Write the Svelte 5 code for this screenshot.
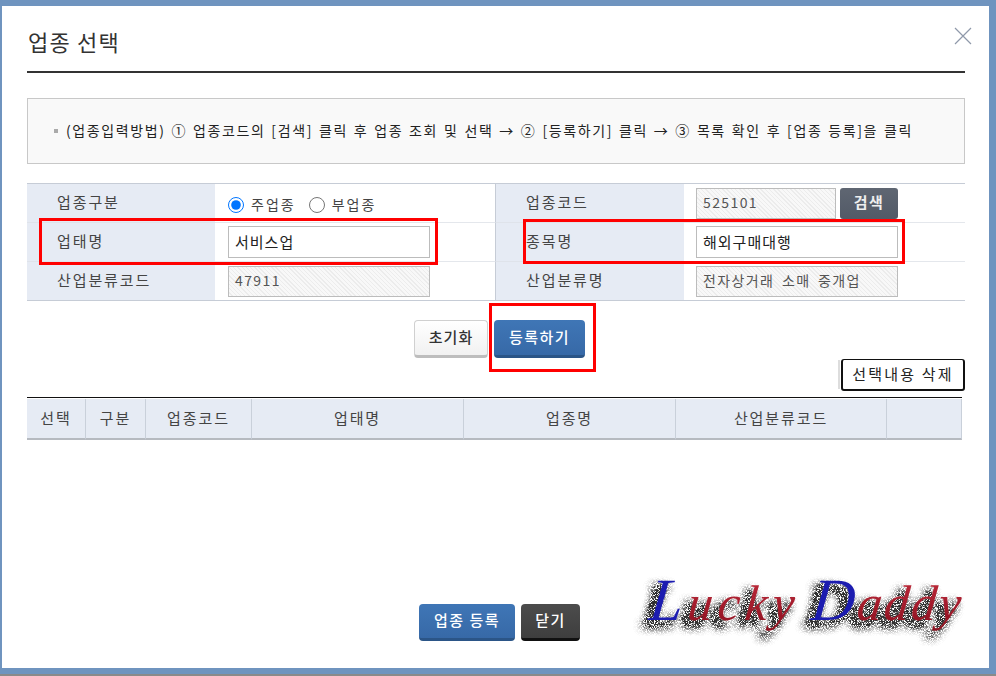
<script>
	let columns = [
		{ name: '선택', width: 59 },
		{ name: '구분', width: 60 },
		{ name: '업종코드', width: 106 },
		{ name: '업태명', width: 212 },
		{ name: '업종명', width: 212 },
		{ name: '산업분류코드', width: 211 },
		{ name: '', width: 75 }
	];
</script>

<div class="modal">
	<header>
		<h1>업종 선택</h1>
		<svg class="close" width="18" height="18" viewBox="0 0 18 18">
			<path d="M1 1 L17 17 M17 1 L1 17" />
		</svg>
	</header>

	<div class="notice"><i></i>(업종입력방법) ① 업종코드의 [검색] 클릭 후 업종 조회 및 선택 → ② [등록하기] 클릭 → ③ 목록 확인 후 [업종 등록]을 클릭</div>

	<div class="form">
		<div class="label">업종구분</div>
		<div class="value radios">
			<label><input type="radio" name="kind" checked />주업종</label>
			<label><input type="radio" name="kind" />부업종</label>
		</div>
		<div class="label">업종코드</div>
		<div class="value last">
			<span class="field hatch short">525101</span>
			<button class="search">검색</button>
		</div>

		<div class="label">업태명</div>
		<div class="value"><span class="field">서비스업</span></div>
		<div class="label">종목명</div>
		<div class="value last"><span class="field">해외구매대행</span></div>

		<div class="label end">산업분류코드</div>
		<div class="value end"><span class="field hatch">47911</span></div>
		<div class="label end">산업분류명</div>
		<div class="value last end"><span class="field hatch">전자상거래 소매 중개업</span></div>

		<b class="mark mark-a"></b>
		<b class="mark mark-b"></b>
	</div>

	<div class="actions">
		<button class="btn light">초기화</button>
		<span class="highlighted">
			<button class="btn blue">등록하기</button>
		</span>
	</div>

	<div class="delete-row">
		<button class="delete">선택내용 삭제</button>
	</div>

	<table>
		<thead>
			<tr>
				{#each columns as col}
					<th style="width: {col.width}px">{col.name}</th>
				{/each}
			</tr>
		</thead>
	</table>

	<footer>
		<button class="btn blue register">업종 등록</button>
		<button class="btn dark">닫기</button>
		<svg class="logo" width="345" height="98" viewBox="0 0 345 98">
			<defs>
				<linearGradient id="red-ink" x1="0" y1="0" x2="0" y2="1">
					<stop offset="0" stop-color="#c9303f" />
					<stop offset="1" stop-color="#8a1020" />
				</linearGradient>
				<filter id="speckle" x="-10%" y="-40%" width="120%" height="190%">
					<feGaussianBlur in="SourceAlpha" stdDeviation="4" result="blur" />
					<feTurbulence type="fractalNoise" baseFrequency="1.3" numOctaves="2" seed="7" result="noise" />
					<feColorMatrix in="noise" type="matrix" values="0 0 0 0 0.03  0 0 0 0 0.03  0 0 0 0 0.03  5 0 0 0 -1.9" result="grain" />
					<feComposite in="grain" in2="blur" operator="in" result="dust" />
					<feComponentTransfer in="dust" result="dense">
						<feFuncA type="linear" slope="4" />
					</feComponentTransfer>
					<feOffset in="dense" dx="-6" dy="6" result="shadow" />
					<feMerge>
						<feMergeNode in="shadow" />
						<feMergeNode in="SourceGraphic" />
					</feMerge>
				</filter>
			</defs>
			<g filter="url(#speckle)">
				<text x="22" y="56" class="script lucky" transform="skewX(-6)"><tspan class="ink-blue" font-size="60">L</tspan><tspan class="ink-red">ucky</tspan></text>
				<text x="184" y="56" class="script" transform="skewX(-6)"><tspan class="ink-blue" font-size="60">D</tspan><tspan class="ink-red">addy</tspan></text>
			</g>
		</svg>
	</footer>
</div>

<style>
	:global(body) {
		margin: 0;
		background: #6f94bf;
		font-family: "Noto Sans CJK KR", "Liberation Sans", sans-serif;
	}
	:global(#app) {
		height: 676px;
		overflow: hidden;
		background: linear-gradient(#6f94bf 674px, #8a8a8a 674px);
	}
	.modal {
		box-sizing: border-box;
		width: 987px;
		height: 662px;
		margin: 6px 0 0 2px;
		padding: 0 24px 0 25px;
		background: #fff;
		color: #333;
	}
	header {
		position: relative;
		height: 65px;
		border-bottom: 2px solid #333;
	}
	h1 {
		margin: 0;
		padding: 18px 0 0 1px;
		font-size: 22px;
		line-height: 34px;
		font-weight: 400;
		letter-spacing: 1.2px;
	}
	.close {
		position: absolute;
		top: 21px;
		right: -7px;
	}
	.close path {
		stroke: #8f99aa;
		stroke-width: 1.2;
		fill: none;
	}
	.notice {
		display: flex;
		align-items: center;
		box-sizing: border-box;
		height: 66px;
		margin-top: 25px;
		padding: 0 0 3px 26px;
		border: 1px solid #c8c8c8;
		background: #f9f9f9;
		font-size: 14px;
		letter-spacing: 1.6px;
		word-spacing: 1.2px;
		white-space: pre;
		color: #222;
	}
	.notice i {
		width: 4px;
		height: 4px;
		margin: 3px 8px 0 0;
		background: #aaa;
	}
	.form {
		position: relative;
		display: grid;
		grid-template-columns: 188px 281px 188px 281px;
		grid-template-rows: 39px 39px 38px;
		margin-top: 19px;
		border-top: 1px solid #c6ccd6;
		border-bottom: 1px solid #c6ccd6;
	}
	.label {
		display: flex;
		align-items: center;
		padding: 0 0 3px 30px;
		background: #e6ebf4;
		border-bottom: 1px solid #dfe3ea;
		font-size: 15px;
		letter-spacing: 1.9px;
		color: #444;
	}
	.value {
		display: flex;
		align-items: center;
		gap: 4px;
		padding-left: 13px;
		border-bottom: 1px solid #e4e7ec;
		border-right: 1px solid #c6ccd6;
	}
	.value.last {
		padding-left: 12px;
		border-right: 0;
	}
	.end {
		border-bottom: 0;
	}
	.radios {
		gap: 13px;
		padding-top: 3px;
		font-size: 14px;
		letter-spacing: 2px;
		color: #444;
	}
	.radios label {
		display: flex;
		align-items: center;
		gap: 7px;
		padding-bottom: 2px;
	}
	.radios input {
		width: 16px;
		height: 16px;
		margin: 2px 0 0;
	}
	.field {
		display: flex;
		align-items: center;
		box-sizing: border-box;
		width: 202px;
		height: 32px;
		padding: 0 0 2px 6px;
		border: 1px solid #bcbcbc;
		background: #fff;
		font-size: 15px;
		letter-spacing: 1px;
		color: #222;
	}
	.hatch {
		height: 31px;
		background: repeating-linear-gradient(45deg, #f8f8f8 0 2px, #ececec 2px 3px);
		color: #555;
		font-size: 14px;
		letter-spacing: 1.4px;
		word-spacing: 3px;
	}
	.short {
		width: 140px;
	}
	button {
		font-family: inherit;
		cursor: pointer;
	}
	.search {
		width: 58px;
		height: 31px;
		padding: 0 0 3px;
		border: 0;
		border-radius: 3px;
		background: linear-gradient(#5f6672, #525a67);
		color: #eee;
		font-size: 15px;
		font-weight: 700;
		letter-spacing: 1.4px;
	}
	.mark {
		position: absolute;
		border: 3px solid #f00;
		box-sizing: border-box;
		pointer-events: none;
	}
	.mark-a {
		left: 12px;
		top: 34px;
		width: 399px;
		height: 47px;
	}
	.mark-b {
		left: 496px;
		top: 35px;
		width: 382px;
		height: 45px;
	}
	.actions {
		display: flex;
		justify-content: flex-start;
		gap: 6px;
		margin: 19px 0 0 387px;
	}
	.highlighted {
		position: relative;
		display: block;
	}
	.highlighted::after {
		content: '';
		position: absolute;
		left: -5px;
		top: -17px;
		width: 107px;
		height: 69px;
		box-sizing: border-box;
		border: 3px solid #f00;
		pointer-events: none;
	}
	.btn {
		flex: none;
		height: 38px;
		padding: 0 0 3px;
		border-radius: 4px;
		font-size: 15px;
		font-weight: 500;
		letter-spacing: 1.5px;
	}
	.light {
		width: 74px;
		border: 1px solid #d0d0d0;
		border-bottom: 3px solid #bdbdbd;
		background: linear-gradient(#fff, #f1f1f1);
		color: #333;
		letter-spacing: 1.1px;
	}
	.blue {
		width: 91px;
		border: 0;
		border-bottom: 3px solid #2b5587;
		background: linear-gradient(#3f76b6, #3769a7);
		color: #fff;
	}
	.dark {
		width: 59px;
		height: 37px;
		border: 0;
		border-bottom: 3px solid #111;
		background: linear-gradient(#4c4c4c, #3e3e3e);
		color: #fff;
	}
	.delete-row {
		display: flex;
		justify-content: flex-end;
		margin-top: 1px;
	}
	.delete {
		position: relative;
		width: 124px;
		height: 32px;
		padding: 0 0 3px;
		border: 1px solid #111;
		border-width: 1px 2px 2px 2px;
		border-radius: 3px;
		background: #fff;
		color: #222;
		font-size: 15px;
		letter-spacing: 2.2px;
	}
	.delete::before {
		content: '';
		position: absolute;
		left: -5px;
		top: 0;
		bottom: 0;
		width: 2px;
		background: #ddd;
	}
	table {
		width: 935px;
		margin-top: 6px;
		border-collapse: separate;
		border-spacing: 0;
		table-layout: fixed;
		border-top: 1px solid #111;
		padding-top: 1px;
	}
	th {
		box-sizing: border-box;
		height: 41px;
		padding: 0 0 3px;
		background: #e6ebf4;
		border-right: 1px solid #c9d0da;
		border-bottom: 2px solid #b6bac0;
		font-size: 15px;
		font-weight: 400;
		letter-spacing: 1.9px;
		color: #444;
	}
	footer {
		display: flex;
		align-items: flex-start;
		gap: 6px;
		margin-top: 164px;
		padding-left: 392px;
	}
	.register {
		width: 96px;
		height: 37px;
	}
	.logo {
		flex: none;
		margin: -40px 0 0 46px;
	}
	.script {
		font-family: "Liberation Serif", serif;
		font-style: italic;
		font-size: 50px;
		letter-spacing: 2.2px;
	}
	.lucky {
		letter-spacing: 5px;
	}
	.ink-blue {
		fill: #1c1cb0;
	}
	.ink-red {
		fill: url(#red-ink);
	}
</style>
